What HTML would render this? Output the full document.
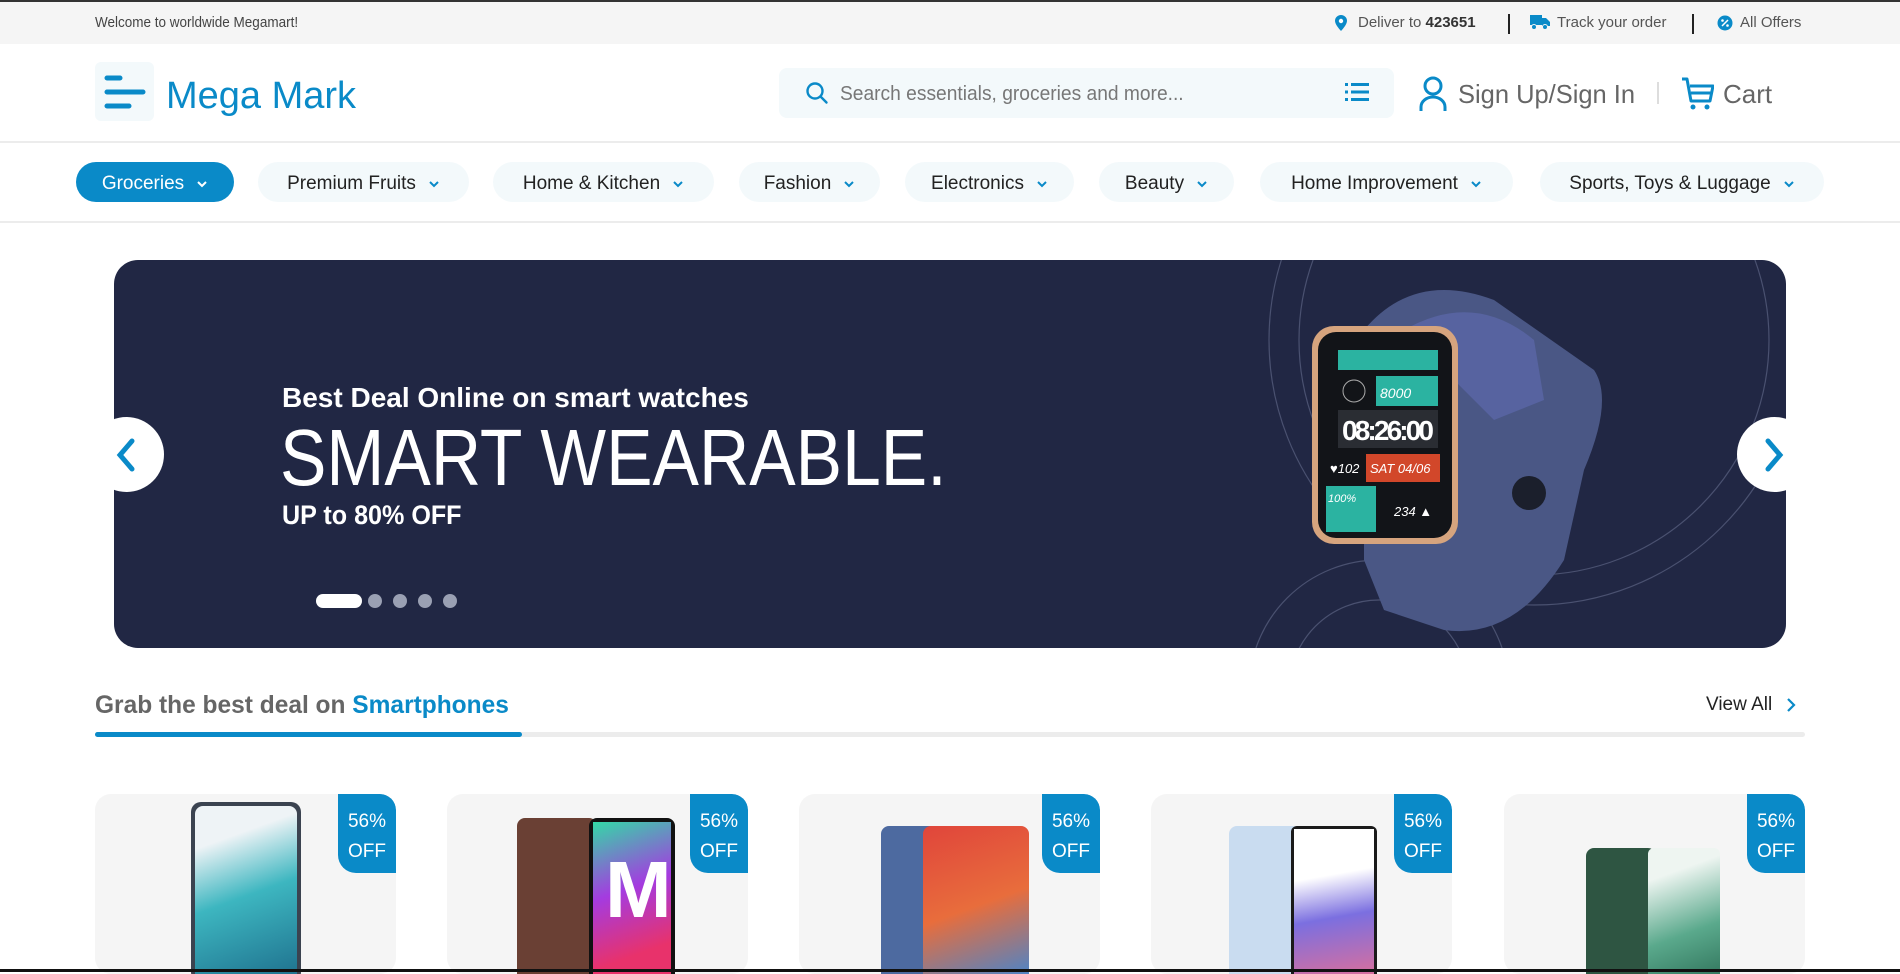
<!DOCTYPE html>
<html><head><meta charset="utf-8"><style>
*{margin:0;padding:0;box-sizing:border-box}
body{width:1900px;height:972px;overflow:hidden;background:#fff;font-family:"Liberation Sans",sans-serif;position:relative}
.a{position:absolute}
.n{display:inline-block;transform-origin:0 50%;white-space:nowrap}
.pill{position:absolute;top:162px;height:40px;border-radius:20px;background:#f3f9fb;color:#222;font-size:19px;display:flex;align-items:center;justify-content:center;gap:12px;padding-top:3px}
.pill svg{width:12px;height:8px}
.card{position:absolute;top:794px;width:301px;height:180px;background:#f5f5f5;border-radius:16px;overflow:hidden}
.badge{position:absolute;right:0;top:0;width:58px;height:79px;background:#0a8ac8;border-radius:0 16px 0 18px;color:#fff;font-size:19px;line-height:30px;padding-top:13px;text-align:center}
</style></head><body>
<div class="a" style="left:0;top:0;width:1900px;height:2px;background:#333"></div>
<div class="a" style="left:0;top:2px;width:1900px;height:42px;background:#f5f5f5"></div>
<div class="a" style="left:95px;top:14px;font-size:15px;color:#444"><span class="n" style="transform:scaleX(.9)">Welcome to worldwide Megamart!</span></div>
<svg class="a" style="left:1335px;top:15px" width="12" height="16" viewBox="0 0 12 16"><path d="M6 0C2.7 0 0 2.6 0 5.8 0 10 6 16 6 16s6-6 6-10.2C12 2.6 9.3 0 6 0z" fill="#0a8ac8"/><circle cx="6" cy="6" r="2.2" fill="#fff"/></svg>
<div class="a" style="left:1358px;top:14px;font-size:15px;color:#555"><span class="n">Deliver to <b style="color:#333">423651</b></span></div>
<div class="a" style="left:1508px;top:14px;width:2px;height:20px;background:#222"></div>
<svg class="a" style="left:1530px;top:15px" width="20" height="15" viewBox="0 0 20 15"><rect x="0" y="0" width="12" height="10" fill="#0a8ac8"/><path d="M12 3h4l4 4v4h-8z" fill="#0a8ac8"/><circle cx="4" cy="12" r="2.5" fill="#0a8ac8" stroke="#f5f5f5"/><circle cx="15" cy="12" r="2.5" fill="#0a8ac8" stroke="#f5f5f5"/></svg>
<div class="a" style="left:1557px;top:14px;font-size:15px;color:#555"><span class="n">Track your order</span></div>
<div class="a" style="left:1692px;top:14px;width:2px;height:20px;background:#222"></div>
<svg class="a" style="left:1717px;top:15px" width="16" height="16" viewBox="0 0 16 16"><circle cx="8" cy="8" r="7.5" fill="#0a8ac8"/><path d="M5 11L11 5" stroke="#fff" stroke-width="1.5"/><circle cx="5.5" cy="5.5" r="1.3" fill="#fff"/><circle cx="10.5" cy="10.5" r="1.3" fill="#fff"/></svg>
<div class="a" style="left:1740px;top:14px;font-size:15px;color:#555"><span class="n">All Offers</span></div>

<div class="a" style="left:95px;top:62px;width:59px;height:59px;background:#f3f9fb;border-radius:6px"></div>
<svg class="a" style="left:104px;top:74px" width="42" height="36" viewBox="0 0 42 36"><g stroke="#0a8ac8" stroke-width="5" stroke-linecap="round"><path d="M3 4h13M3 18h36M3 32h22"/></g></svg>
<div class="a" style="left:166px;top:74px;font-size:38px;color:#0a8ac8;line-height:44px"><span class="n">Mega Mark</span></div>

<div class="a" style="left:779px;top:68px;width:615px;height:50px;background:#f3f9fb;border-radius:8px"></div>
<svg class="a" style="left:805px;top:81px" width="24" height="24" viewBox="0 0 24 24"><circle cx="10" cy="10" r="7.5" fill="none" stroke="#0a8ac8" stroke-width="2.4"/><path d="M15.5 15.5l6 6" stroke="#0a8ac8" stroke-width="2.4" stroke-linecap="round"/></svg>
<div class="a" style="left:840px;top:83px;font-size:20px;color:#777"><span class="n" style="transform:scaleX(.96)">Search essentials, groceries and more...</span></div>
<svg class="a" style="left:1345px;top:82px" width="24" height="20" viewBox="0 0 24 20"><g fill="#0a8ac8"><rect x="0" y="1" width="3" height="3"/><rect x="0" y="8.5" width="3" height="3"/><rect x="0" y="16" width="3" height="3"/><rect x="6" y="1" width="18" height="3"/><rect x="6" y="8.5" width="18" height="3"/><rect x="6" y="16" width="18" height="3"/></g></svg>
<svg class="a" style="left:1418px;top:76px" width="30" height="36" viewBox="0 0 30 36"><circle cx="15" cy="10" r="8" fill="none" stroke="#0a8ac8" stroke-width="3"/><path d="M3 35v-4a12 10 0 0 1 24 0v4" fill="none" stroke="#0a8ac8" stroke-width="3"/></svg>
<div class="a" style="left:1458px;top:79px;font-size:26px;color:#666"><span class="n" style="transform:scaleX(.98)">Sign Up/Sign In</span></div>
<div class="a" style="left:1657px;top:82px;width:2px;height:22px;background:#ddd"></div>
<svg class="a" style="left:1680px;top:76px" width="34" height="36" viewBox="0 0 34 36"><path d="M2 3h5l4 22h19l3-15H10" fill="none" stroke="#0a8ac8" stroke-width="3" stroke-linejoin="round"/><path d="M11 17h20" stroke="#0a8ac8" stroke-width="3"/><circle cx="13" cy="31" r="2.5" fill="#0a8ac8"/><circle cx="27" cy="31" r="2.5" fill="#0a8ac8"/></svg>
<div class="a" style="left:1723px;top:79px;font-size:26px;color:#666"><span class="n">Cart</span></div>
<div class="a" style="left:0;top:141px;width:1900px;height:2px;background:#ececec"></div>

<div class="pill" style="left:76px;width:158px;background:#0a8ac8;color:#fff"><span>Groceries</span><svg viewBox="0 0 12 8"><path d="M2 2l4 4 4-4" fill="none" stroke="#fff" stroke-width="2"/></svg></div>
<div class="pill" style="left:258px;width:211px"><span>Premium Fruits</span><svg viewBox="0 0 12 8"><path d="M2 2l4 4 4-4" fill="none" stroke="#0a8ac8" stroke-width="2"/></svg></div>
<div class="pill" style="left:493px;width:221px"><span>Home &amp; Kitchen</span><svg viewBox="0 0 12 8"><path d="M2 2l4 4 4-4" fill="none" stroke="#0a8ac8" stroke-width="2"/></svg></div>
<div class="pill" style="left:739px;width:141px"><span>Fashion</span><svg viewBox="0 0 12 8"><path d="M2 2l4 4 4-4" fill="none" stroke="#0a8ac8" stroke-width="2"/></svg></div>
<div class="pill" style="left:905px;width:169px"><span>Electronics</span><svg viewBox="0 0 12 8"><path d="M2 2l4 4 4-4" fill="none" stroke="#0a8ac8" stroke-width="2"/></svg></div>
<div class="pill" style="left:1099px;width:135px"><span>Beauty</span><svg viewBox="0 0 12 8"><path d="M2 2l4 4 4-4" fill="none" stroke="#0a8ac8" stroke-width="2"/></svg></div>
<div class="pill" style="left:1260px;width:253px"><span>Home Improvement</span><svg viewBox="0 0 12 8"><path d="M2 2l4 4 4-4" fill="none" stroke="#0a8ac8" stroke-width="2"/></svg></div>
<div class="pill" style="left:1540px;width:284px"><span>Sports, Toys &amp; Luggage</span><svg viewBox="0 0 12 8"><path d="M2 2l4 4 4-4" fill="none" stroke="#0a8ac8" stroke-width="2"/></svg></div>
<div class="a" style="left:0;top:221px;width:1900px;height:2px;background:#ececec"></div>

<div class="a" style="left:114px;top:260px;width:1672px;height:388px;background:#212744;border-radius:24px;overflow:hidden">
<svg class="a" style="left:0;top:0" width="1672" height="388"><g fill="none" stroke="#4a5170" stroke-width="1.2"><circle cx="1420" cy="80" r="235"/><circle cx="1420" cy="80" r="265"/><circle cx="1265" cy="430" r="130"/><circle cx="1265" cy="430" r="90"/></g>
<path d="M1250 70 Q1300 10 1380 40 L1480 110 Q1500 140 1470 210 L1450 300 Q1400 380 1330 370 L1270 350 L1250 300 Z" fill="#4a5785"/>
<path d="M1290 70 Q1360 30 1420 80 L1430 140 L1380 160 Z" fill="#5763a0"/>
<circle cx="1415" cy="233" r="17" fill="#1b1f2c"/>
<rect x="1198" y="66" width="146" height="218" rx="22" fill="#d6a47e"/>
<rect x="1204" y="72" width="134" height="206" rx="18" fill="#121418"/>
<rect x="1224" y="90" width="100" height="20" fill="#2bb3a1"/>
<rect x="1262" y="116" width="62" height="30" fill="#2bb3a1"/>
<text x="1266" y="138" font-family="Liberation Sans" font-style="italic" font-size="14" fill="#fff">8000</text>
<circle cx="1240" cy="131" r="11" fill="none" stroke="#aaa"/>
<rect x="1224" y="150" width="100" height="38" fill="#2a2d33"/>
<text x="1228" y="180" font-family="Liberation Sans" font-weight="bold" font-size="28" fill="#fff" textLength="92">08:26:00</text>
<rect x="1252" y="194" width="74" height="28" fill="#d2472a"/>
<text x="1256" y="213" font-family="Liberation Sans" font-style="italic" font-size="13" fill="#fff">SAT 04/06</text>
<text x="1216" y="213" font-family="Liberation Sans" font-style="italic" font-size="13" fill="#fff">♥102</text>
<rect x="1212" y="226" width="50" height="46" fill="#2bb3a1"/>
<text x="1214" y="242" font-family="Liberation Sans" font-style="italic" font-size="11" fill="#fff">100%</text>
<text x="1280" y="256" font-family="Liberation Sans" font-style="italic" font-size="13" fill="#fff">234 ▲</text>
</svg>
<div class="a" style="left:168px;top:122px;font-size:28px;color:#fff;font-weight:bold"><span class="n">Best Deal Online on smart watches</span></div>
<div class="a" style="left:166px;top:152px;font-size:80px;color:#fff;line-height:92px"><span class="n" style="transform:scaleX(.87)">SMART WEARABLE.</span></div>
<div class="a" style="left:168px;top:240px;font-size:27px;color:#fff;font-weight:bold"><span class="n" style="transform:scaleX(.93)">UP to 80% OFF</span></div>
<div class="a" style="left:202px;top:334px;width:46px;height:14px;border-radius:7px;background:#fff"></div>
<div class="a" style="left:254px;top:334px;width:14px;height:14px;border-radius:7px;background:#9aa0b3"></div>
<div class="a" style="left:279px;top:334px;width:14px;height:14px;border-radius:7px;background:#9aa0b3"></div>
<div class="a" style="left:304px;top:334px;width:14px;height:14px;border-radius:7px;background:#9aa0b3"></div>
<div class="a" style="left:329px;top:334px;width:14px;height:14px;border-radius:7px;background:#9aa0b3"></div>
</div>
<div class="a" style="left:89px;top:417px;width:75px;height:75px;border-radius:50%;background:#fff"></div>
<svg class="a" style="left:114px;top:437px" width="24" height="36" viewBox="0 0 24 36"><path d="M18 4L6 18l12 14" fill="none" stroke="#0a8ac8" stroke-width="5" stroke-linecap="round"/></svg>
<div class="a" style="left:1737px;top:417px;width:75px;height:75px;border-radius:50%;background:#fff"></div>
<svg class="a" style="left:1762px;top:437px" width="24" height="36" viewBox="0 0 24 36"><path d="M6 4l12 14L6 32" fill="none" stroke="#0a8ac8" stroke-width="5" stroke-linecap="round"/></svg>

<div class="a" style="left:95px;top:691px;font-size:25px;font-weight:bold;color:#666"><span class="n" style="transform:scaleX(.98)">Grab the best deal on <span style="color:#0a8ac8">Smartphones</span></span></div>
<div class="a" style="left:95px;top:732px;width:1710px;height:5px;background:#ececec;border-radius:3px"></div>
<div class="a" style="left:95px;top:732px;width:427px;height:5px;background:#0a8ac8;border-radius:3px"></div>
<div class="a" style="left:1706px;top:694px;font-size:19px;color:#222"><span class="n">View All</span></div>
<svg class="a" style="left:1786px;top:697px" width="10" height="16" viewBox="0 0 10 16"><path d="M2 2l6 6-6 6" fill="none" stroke="#0a8ac8" stroke-width="2.2"/></svg>

<div class="card" style="left:95px"><div class="a" style="left:96px;top:8px;width:110px;height:180px;border-radius:10px;background:#3b4350"></div><div class="a" style="left:100px;top:12px;width:102px;height:180px;border-radius:8px;background:linear-gradient(160deg,#eef3f6 20%,#3db6c0 50%,#1c6b8a)"></div><div class="badge">56%<br>OFF</div></div>
<div class="card" style="left:447px"><div class="a" style="left:70px;top:24px;width:80px;height:170px;border-radius:8px;background:#6a4034"></div><div class="a" style="left:142px;top:24px;width:86px;height:170px;border-radius:8px;background:#111"></div><div class="a" style="left:146px;top:28px;width:78px;height:170px;background:linear-gradient(160deg,#33d9a6,#a43be0 40%,#e8326b 75%)"></div><div class="a" style="left:158px;top:50px;font-size:80px;font-weight:bold;color:#fff">M</div><div class="badge">56%<br>OFF</div></div>
<div class="card" style="left:799px"><div class="a" style="left:82px;top:32px;width:60px;height:160px;border-radius:8px;background:#4d6aa0"></div><div class="a" style="left:124px;top:32px;width:106px;height:160px;border-radius:8px;background:linear-gradient(160deg,#e0453b,#e86d3c 50%,#3a87d8)"></div><div class="badge">56%<br>OFF</div></div>
<div class="card" style="left:1151px"><div class="a" style="left:78px;top:32px;width:72px;height:160px;border-radius:8px;background:#c9dcf0"></div><div class="a" style="left:140px;top:32px;width:86px;height:160px;border-radius:6px;background:#1a1a1a"></div><div class="a" style="left:143px;top:35px;width:80px;height:160px;background:linear-gradient(170deg,#fff 30%,#7b6fe0 55%,#ec6f8f)"></div><div class="badge">56%<br>OFF</div></div>
<div class="card" style="left:1504px"><div class="a" style="left:82px;top:54px;width:70px;height:140px;border-radius:8px;background:#2e5542"></div><div class="a" style="left:144px;top:54px;width:72px;height:140px;border-radius:6px;background:linear-gradient(160deg,#eef5f1 20%,#5aa98c 60%,#2b6d55)"></div><div class="badge">56%<br>OFF</div></div>
<div class="a" style="left:0;top:969px;width:1900px;height:3px;background:#111"></div>
</body></html>
